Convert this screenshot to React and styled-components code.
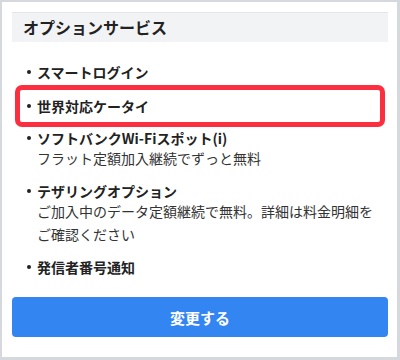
import React from 'react';
import styled, { createGlobalStyle } from 'styled-components';

const GlobalStyle = createGlobalStyle`
  html, body {
    margin: 0;
    padding: 0;
    background: #d5d9dd;
  }
  body {
    font-family: "Noto Sans CJK JP", "Noto Sans", sans-serif;
    color: #222;
  }
`;

const Card = styled.div`
  box-sizing: border-box;
  width: 400px;
  height: 360px;
  background: #fff;
  border-style: solid;
  border-color: #d5d9dd;
  border-width: 2px 3px 3px 2px;
  padding: 10px 9px 20px 10px;
  display: flex;
  flex-direction: column;
`;

const Header = styled.h2`
  margin: 0;
  height: 29px;
  line-height: 29px;
  border-top: 1px solid #e3e6e9;
  background: #f2f3f5;
  padding-left: 11px;
  font-size: 16px;
  font-weight: 700;
  color: #222;
`;

const List = styled.ul`
  list-style: none;
  margin: 0;
  padding: 20px 0 0;
  display: flex;
  flex-direction: column;
  gap: 11px;
`;

const Item = styled.li`
  padding: ${(p) => (p.$highlight ? '6px 0 6px 7px' : '0 0 0 15px')};
  margin: ${(p) => (p.$highlight ? '-8px 3px -10px 3px' : '0')};
  border: ${(p) => (p.$highlight ? '5px solid #fc2f40' : 'none')};
  border-radius: ${(p) => (p.$highlight ? '7px' : '0')};
`;

const Title = styled.div`
  display: flex;
  align-items: center;
  font-size: 14px;
  font-weight: 700;
  line-height: 20px;
`;

const Dot = styled.span`
  width: 4px;
  height: 4px;
  border-radius: 50%;
  background: #222;
  margin-right: 6px;
  flex-shrink: 0;
`;

const Note = styled.p`
  margin: -1px 0 0;
  padding-left: 10px;
  max-width: 340px;
  font-size: 14px;
  line-height: 23px;
  color: #333;
`;

const SubmitButton = styled.button`
  margin-top: auto;
  height: 40px;
  border: none;
  border-radius: 4px;
  background: #3385f1;
  color: #fff;
  font-family: inherit;
  font-size: 15px;
  font-weight: 700;
  cursor: pointer;
`;

const services = [
  { title: 'スマートログイン' },
  { title: '世界対応ケータイ', highlight: true },
  { title: 'ソフトバンクWi-Fiスポット(i)', note: 'フラット定額加入継続でずっと無料' },
  {
    title: 'テザリングオプション',
    note: 'ご加入中のデータ定額継続で無料。詳細は料金明細をご確認ください',
  },
  { title: '発信者番号通知' },
];

const App = () => {
  return (
    <>
      <GlobalStyle />
      <Card>
        <Header>オプションサービス</Header>
        <List>
          {services.map((s) => (
            <Item key={s.title} $highlight={s.highlight}>
              <Title>
                <Dot />
                {s.title}
              </Title>
              {s.note && <Note>{s.note}</Note>}
            </Item>
          ))}
        </List>
        <SubmitButton>変更する</SubmitButton>
      </Card>
    </>
  );
};

export default App;
